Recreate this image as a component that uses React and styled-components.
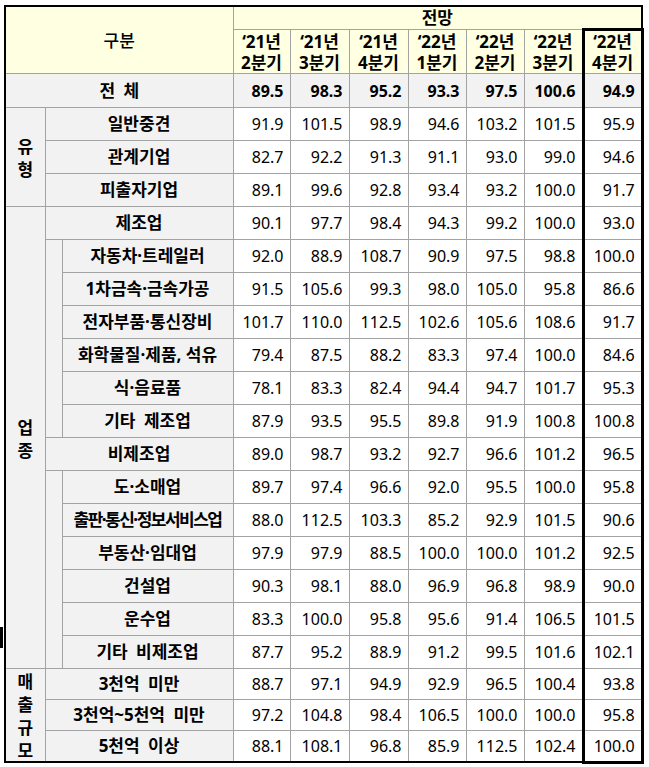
import React from "react";
import styled, { createGlobalStyle, css } from "styled-components";

const Global = createGlobalStyle`
  html, body { margin: 0; padding: 0; background: #ffffff; }
  body { font-family: "Noto Sans", "Noto Sans CJK KR", sans-serif; color: #000; }
`;

const Page = styled.div`
  position: relative;
  width: 649px;
  height: 767px;
  padding: 5px 0 0 4px;
  box-sizing: border-box;
`;

const Marker = styled.span`
  position: absolute;
  left: 0;
  top: 627px;
  width: 3px;
  height: 21px;
  background: #000;
`;

const Table = styled.table`
  border-collapse: collapse;
  table-layout: fixed;
  width: 638px;
  border: 2px solid #000;
  font-size: 16px;
`;

const lastCol = css`
  border-left: 3px solid #000;
  border-right: 3px solid #000;
`;

const HeadCell = styled.th`
  background: #ffffe1;
  border: 1px solid #a3a3a3;
  font-family: "Noto Sans", "Noto Sans CJK KR", sans-serif;
  font-weight: ${(p) => (p.$weight ? p.$weight : 700)};
  font-size: 17px;
  line-height: 20px;
  padding: 0;
  text-align: center;
  vertical-align: middle;
  ${(p) => p.$last && lastCol}
  ${(p) => p.$last && css`border-top: 3px solid #000;`}
`;

const HeadLine = styled.span`
  display: block;
  height: 21px;
  line-height: 21px;
  white-space: nowrap;
`;

const HeadRow = styled.tr`
  height: ${(p) => p.$h}px;
`;

const Row = styled.tr`
  height: ${(p) => p.$h}px;
`;

const LabelCell = styled.td`
  background: #f2f2f2;
  border: 1px solid #a3a3a3;
  font-family: "Noto Sans", "Noto Sans CJK KR", sans-serif;
  font-weight: 700;
  font-size: 17px;
  line-height: 22px;
  text-align: center;
  vertical-align: middle;
  padding: 0;
  white-space: pre;
  word-spacing: ${(p) => (p.$wide ? "4px" : "0px")};
  letter-spacing: ${(p) => (p.$tight ? "-1.5px" : "0px")};
`;

const CatCell = styled.td`
  background: #f2f2f2;
  border: 1px solid #a3a3a3;
  font-family: "Noto Sans CJK KR", sans-serif;
  font-weight: 700;
  font-size: 17px;
  line-height: 23px;
  text-align: center;
  vertical-align: middle;
  padding: 0;
`;

const CatLine = styled.span`
  display: block;
  height: 23px;
  line-height: 23px;
`;

const Indent = styled.td`
  background: #f2f2f2;
  border: 1px solid #a3a3a3;
  padding: 0;
`;

const NumCell = styled.td`
  background: ${(p) => (p.$total ? "#f2f2f2" : "#ffffff")};
  border: 1px solid #a3a3a3;
  font-family: "Noto Sans", "Open Sans", sans-serif;
  font-weight: ${(p) => (p.$total ? 700 : 400)};
  font-size: 16px;
  line-height: 22px;
  text-align: right;
  vertical-align: middle;
  padding: 0 6px 0 0;
  ${(p) => p.$last && lastCol}
  ${(p) => p.$bottom && p.$last && css`border-bottom: 3px solid #000;`}
`;

const cols = [40, 17, 171, 57, 59, 59, 58, 58, 59, 59];

const periods = [
  ["‘21년", "2분기"],
  ["‘21년", "3분기"],
  ["‘21년", "4분기"],
  ["‘22년", "1분기"],
  ["‘22년", "2분기"],
  ["‘22년", "3분기"],
  ["‘22년", "4분기"],
];

const total = [89.5, 98.3, 95.2, 93.3, 97.5, 100.6, 94.9];

const groups = [
  {
    cat: ["유", "형"],
    rows: [
      { label: "일반중견", v: [91.9, 101.5, 98.9, 94.6, 103.2, 101.5, 95.9] },
      { label: "관계기업", v: [82.7, 92.2, 91.3, 91.1, 93.0, 99.0, 94.6] },
      { label: "피출자기업", v: [89.1, 99.6, 92.8, 93.4, 93.2, 100.0, 91.7] },
    ],
  },
  {
    cat: ["업", "종"],
    rows: [
      { label: "제조업", v: [90.1, 97.7, 98.4, 94.3, 99.2, 100.0, 93.0] },
      { label: "자동차·트레일러", v: [92.0, 88.9, 108.7, 90.9, 97.5, 98.8, 100.0], sub: true, indent: 6 },
      { label: "1차금속·금속가공", v: [91.5, 105.6, 99.3, 98.0, 105.0, 95.8, 86.6], sub: true },
      { label: "전자부품·통신장비", v: [101.7, 110.0, 112.5, 102.6, 105.6, 108.6, 91.7], sub: true },
      { label: "화학물질·제품, 석유", v: [79.4, 87.5, 88.2, 83.3, 97.4, 100.0, 84.6], sub: true },
      { label: "식·음료품", v: [78.1, 83.3, 82.4, 94.4, 94.7, 101.7, 95.3], sub: true },
      { label: "기타 제조업", v: [87.9, 93.5, 95.5, 89.8, 91.9, 100.8, 100.8], sub: true, wide: true },
      { label: "비제조업", v: [89.0, 98.7, 93.2, 92.7, 96.6, 101.2, 96.5] },
      { label: "도·소매업", v: [89.7, 97.4, 96.6, 92.0, 95.5, 100.0, 95.8], sub: true, indent: 6 },
      { label: "출판·통신·정보서비스업", v: [88.0, 112.5, 103.3, 85.2, 92.9, 101.5, 90.6], sub: true, tight: true },
      { label: "부동산·임대업", v: [97.9, 97.9, 88.5, 100.0, 100.0, 101.2, 92.5], sub: true },
      { label: "건설업", v: [90.3, 98.1, 88.0, 96.9, 96.8, 98.9, 90.0], sub: true },
      { label: "운수업", v: [83.3, 100.0, 95.8, 95.6, 91.4, 106.5, 101.5], sub: true },
      { label: "기타 비제조업", v: [87.7, 95.2, 88.9, 91.2, 99.5, 101.6, 102.1], sub: true, wide: true },
    ],
  },
  {
    cat: ["매", "출", "규", "모"],
    small: true,
    rows: [
      { label: "3천억 미만", v: [88.7, 97.1, 94.9, 92.9, 96.5, 100.4, 93.8], wide: true },
      { label: "3천억~5천억 미만", v: [97.2, 104.8, 98.4, 106.5, 100.0, 100.0, 95.8], wide: true },
      { label: "5천억 이상", v: [88.1, 108.1, 96.8, 85.9, 112.5, 102.4, 100.0], wide: true },
    ],
  },
];

const fmt = (n) => n.toFixed(1);

function Values({ v, total: isTotal, bottom }) {
  return v.map((n, i) => (
    <NumCell key={i} $total={isTotal} $last={i === v.length - 1} $bottom={bottom}>
      {fmt(n)}
    </NumCell>
  ));
}

export default function App() {
  const lastGroup = groups.length - 1;
  return (
    <Page>
      <Global />
      <Marker />
      <Table>
        <colgroup>
          {cols.map((w, i) => (
            <col key={i} style={{ width: w }} />
          ))}
        </colgroup>
        <thead>
          <HeadRow $h={22}>
            <HeadCell colSpan={3} rowSpan={2} $weight={500}>
              <HeadLine>구분</HeadLine>
            </HeadCell>
            <HeadCell colSpan={7}>
              <HeadLine>전망</HeadLine>
            </HeadCell>
          </HeadRow>
          <HeadRow $h={44}>
            {periods.map(([a, b], i) => (
              <HeadCell key={i} $last={i === periods.length - 1}>
                <HeadLine>{a}</HeadLine>
                <HeadLine>{b}</HeadLine>
              </HeadCell>
            ))}
          </HeadRow>
        </thead>
        <tbody>
          <Row $h={34}>
            <LabelCell colSpan={3} $wide>
              전 체
            </LabelCell>
            <Values v={total} total />
          </Row>
          {groups.map((g, gi) =>
            g.rows.map((r, ri) => {
              const bottom = gi === lastGroup && ri === g.rows.length - 1;
              const h = g.small ? 31 : 33;
              return (
                <Row key={`${gi}-${ri}`} $h={h}>
                  {ri === 0 && (
                    <CatCell rowSpan={g.rows.length}>
                      {g.cat.map((c, ci) => (
                        <CatLine key={ci}>{c}</CatLine>
                      ))}
                    </CatCell>
                  )}
                  {r.indent && <Indent rowSpan={r.indent} />}
                  {r.sub ? (
                    <LabelCell $wide={r.wide} $tight={r.tight}>
                      {r.label}
                    </LabelCell>
                  ) : (
                    <LabelCell colSpan={2} $wide={r.wide}>
                      {r.label}
                    </LabelCell>
                  )}
                  <Values v={r.v} bottom={bottom} />
                </Row>
              );
            })
          )}
        </tbody>
      </Table>
    </Page>
  );
}
